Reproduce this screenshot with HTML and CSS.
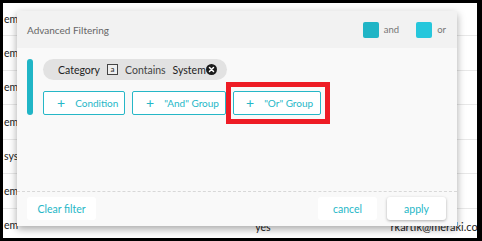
FILE: index.html
```html
<!DOCTYPE html>
<html>
<head>
  <meta charset="UTF-8">
  <link rel="stylesheet" href="styles.css">
</head>
<body>
  <div class="frame">
    <div class="table">
      <div class="row"><span class="cell-first">em</span></div>
      <div class="row"><span class="cell-first">em</span></div>
      <div class="row"><span class="cell-first">em</span></div>
      <div class="row"><span class="cell-first">em</span></div>
      <div class="row"><span class="cell-first">syst</span></div>
      <div class="row"><span class="cell-first">em</span></div>
      <div class="row">
        <span class="cell-first">em</span>
        <span class="cell-yes">yes</span>
        <span class="cell-mail">rkartik@meraki.com</span>
      </div>
    </div>

    <div class="modal">
      <div class="modal-header">
        <span class="modal-title">Advanced Filtering</span>
        <div class="legend">
          <span class="swatch swatch-and"></span><span class="legend-label">and</span>
          <span class="swatch swatch-or"></span><span class="legend-label">or</span>
        </div>
      </div>

      <div class="modal-body">
        <div class="group-bar"></div>
        <div class="group-content">
          <div class="chip">
            <span class="chip-field">Category</span>
            <span class="type-icon">a</span>
            <span class="chip-op">Contains</span>
            <span class="chip-value">System</span>
            <span class="chip-remove">
              <svg width="11" height="11" viewBox="0 0 12 12">
                <circle cx="6" cy="6" r="6" fill="#1a1a1a"></circle>
                <path d="M3.8 3.8l4.4 4.4M8.2 3.8l-4.4 4.4" stroke="#fff" stroke-width="1.6" stroke-linecap="round"></path>
              </svg>
            </span>
          </div>
          <div class="actions">
            <button class="btn-add btn-condition"><span class="plus">+</span>Condition</button>
            <button class="btn-add btn-and"><span class="plus">+</span>"And" Group</button>
            <button class="btn-add btn-or"><span class="plus">+</span>"Or" Group</button>
          </div>
        </div>
      </div>

      <div class="modal-footer">
        <button class="btn-flat btn-clear">Clear filter</button>
        <div class="footer-right">
          <button class="btn-flat">cancel</button>
          <button class="btn-flat btn-apply">apply</button>
        </div>
      </div>
    </div>

    <div class="highlight"></div>
  </div>
</body>
</html>
```

FILE: styles.css
```css
:root {
  --teal: #26b7c7;
  --teal-dark: #20b5c6;
  --teal-light: #26c7dc;
  --text-primary: #333;
  --text-secondary: #666;
  --modal-bg: #f9f9f9;
  --header-bg: #f2f2f2;
}

body {
  margin: 0;
  font-family: Lato, 'Open Sans', sans-serif;
  background: #000;
}

.frame {
  position: relative;
  width: 482px;
  height: 241px;
  box-sizing: border-box;
  border-style: solid;
  border-color: #000;
  border-width: 3px 5px 3px 3px;
  background: #fff;
  overflow: hidden;
}

.table {
  display: flex;
  flex-direction: column;
}

.row {
  height: 34.5px;
  box-sizing: border-box;
  border-bottom: 1px solid #e8e8e8;
  display: flex;
  align-items: center;
  font-size: 10.5px;
  color: #222;
  white-space: nowrap;
}

.row:first-child {
  height: 33px;
}

.cell-first {
  padding-left: 1px;
}

.cell-yes {
  margin-left: 237px;
  margin-top: 3px;
}

.cell-mail {
  margin-left: 120px;
  margin-top: 3px;
  font-size: 11px;
}

/* modal dialog laid over the table */
.modal {
  position: absolute;
  left: 14px;
  top: 8px;
  width: 440px;
  height: 215px;
  background: var(--modal-bg);
  box-shadow: 0 3px 8px rgba(0, 0, 0, 0.35);
  display: flex;
  flex-direction: column;
  white-space: nowrap;
  font-size: 10px;
}

.modal-header {
  height: 37px;
  flex-shrink: 0;
  background: var(--header-bg);
  display: flex;
  align-items: center;
  justify-content: space-between;
  padding: 0 10px;
}

.modal-title {
  color: var(--text-secondary);
}

.legend {
  display: flex;
  align-items: center;
  font-size: 9.5px;
  color: #777;
}

.swatch {
  width: 16px;
  height: 16px;
  border-radius: 2px;
  margin-right: 5px;
}

.swatch-and {
  background: var(--teal-dark);
}

.swatch-or {
  background: var(--teal-light);
}

.legend-label {
  margin-right: 17px;
}

.legend-label:last-child {
  margin-right: 1px;
}

.modal-body {
  flex: 1;
  display: flex;
  gap: 10px;
  padding: 11px 10px;
}

.group-bar {
  width: 6px;
  height: 56px;
  border-radius: 3px;
  background: var(--teal-dark);
}

.group-content {
  display: flex;
  flex-direction: column;
  gap: 11px;
}

.chip {
  align-self: flex-start;
  height: 21px;
  display: flex;
  align-items: center;
  padding: 0 10px 0 15px;
  background: #e2e2e2;
  border-radius: 11px;
  font-size: 10.5px;
  color: #222;
}

.type-icon {
  width: 9px;
  height: 9px;
  border: 1px solid #444;
  margin: 0 7px 0 7px;
  font-size: 8px;
  line-height: 9px;
  text-align: center;
  background: #eee;
  color: #222;
}

.chip-op {
  color: #444;
  margin-right: 7px;
}

.chip-remove {
  display: flex;
}

.actions {
  display: flex;
  gap: 7px;
}

.btn-add {
  height: 24px;
  box-sizing: border-box;
  border: 1px solid var(--teal);
  border-radius: 2px;
  background: #fff;
  color: var(--teal);
  font-family: inherit;
  font-size: 10px;
  display: flex;
  align-items: center;
  padding: 0 0 0 13px;
  white-space: nowrap;
  cursor: pointer;
}

.plus {
  font-size: 14px;
  margin-right: 10px;
  line-height: 1;
}

.btn-condition {
  width: 82px;
}

.btn-and {
  width: 94px;
}

.btn-or {
  width: 88px;
  padding-left: 12px;
}

.modal-footer {
  height: 35px;
  flex-shrink: 0;
  box-sizing: border-box;
  border-top: 1px dashed #d8d8d8;
  display: flex;
  justify-content: space-between;
  padding: 5px 11px 0 10px;
}

.footer-right {
  display: flex;
  gap: 10px;
}

.btn-flat {
  height: 23px;
  width: 59px;
  border: none;
  border-radius: 3px;
  background: #fff;
  color: var(--teal);
  font-family: inherit;
  font-size: 10.5px;
  cursor: pointer;
}

.btn-clear {
  width: 69px;
}

.btn-apply {
  box-shadow: 0 1px 3px rgba(0, 0, 0, 0.3);
}

/* annotation box drawn over the "Or" group button */
.highlight {
  position: absolute;
  left: 223px;
  top: 79px;
  width: 104px;
  height: 42px;
  box-sizing: border-box;
  border: 5px solid #ee1c25;
}
```
